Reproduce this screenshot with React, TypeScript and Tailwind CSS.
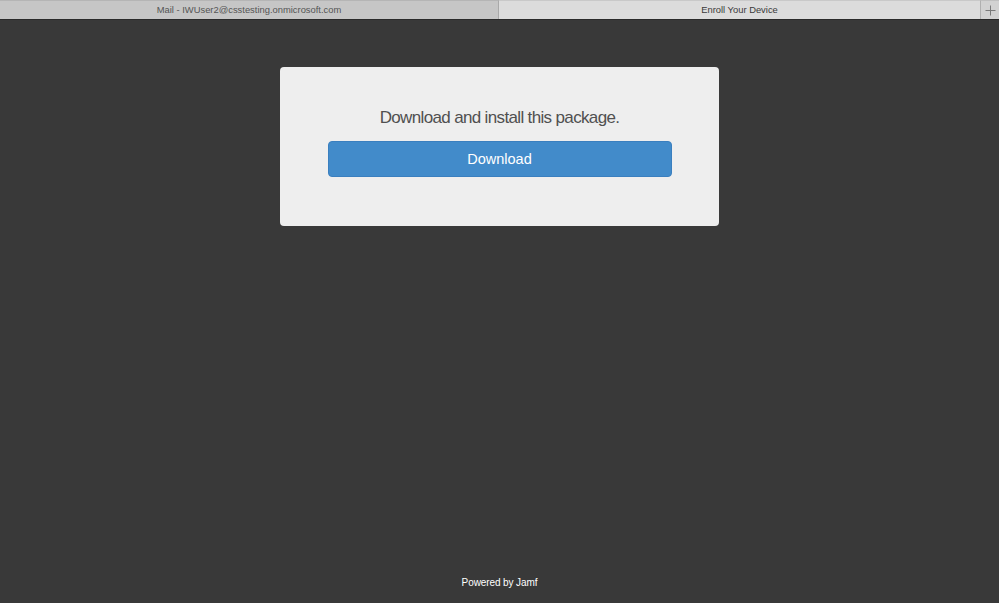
export default function App() {
  return (
    <div
      className="flex h-[603px] w-[999px] flex-col overflow-hidden bg-[#393939]"
      style={{ fontFamily: '"Liberation Sans", Arial, sans-serif' }}
    >
      {/* ── Browser tab strip ─────────────────────────────────────────── */}
      <div className="flex h-[20px] shrink-0 border-b border-[#2a2a2a] text-[9.4px]">
        <div className="flex flex-1 items-center justify-center border-r border-[#a9a9a9] border-t border-t-[#b5b5b5] bg-[#c6c6c6] text-[#555]">
          Mail - IWUser2@csstesting.onmicrosoft.com
        </div>
        <div className="flex w-[481px] items-center justify-center border-t border-t-[#c9c9c9] bg-[#dcdcdc] text-[#3a3a3a]">
          Enroll Your Device
        </div>
        <div className="flex w-[19px] items-center justify-center border-l border-[#b0b0b0] border-t border-t-[#c0c0c0] bg-[#d2d2d2]">
          <svg width="11" height="11" viewBox="0 0 11 11" aria-hidden="true">
            <path d="M5.5 0.5v10M0.5 5.5h10" stroke="#7a7a7a" strokeWidth="1" />
          </svg>
        </div>
      </div>

      {/* ── Page ──────────────────────────────────────────────────────── */}
      <div className="flex flex-1 flex-col items-center">
        <div className="mt-[47px] flex h-[159px] w-[439px] flex-col items-center rounded-[4px] bg-[#eeeeee] pt-[39px]">
          <p className="text-[17px] leading-[24px] tracking-[-0.65px] text-[#505050]">
            Download and install this package.
          </p>
          <button className="mt-[11px] flex h-[36px] w-[344px] items-center justify-center rounded-[4px] border border-[#3a7fbf] bg-[#428bca] pt-[1px] text-[14.5px] text-white">
            Download
          </button>
        </div>

        <div className="mt-auto mb-[13px] text-[10px] tracking-[-0.1px] text-white">
          Powered by Jamf
        </div>
      </div>
    </div>
  )
}
